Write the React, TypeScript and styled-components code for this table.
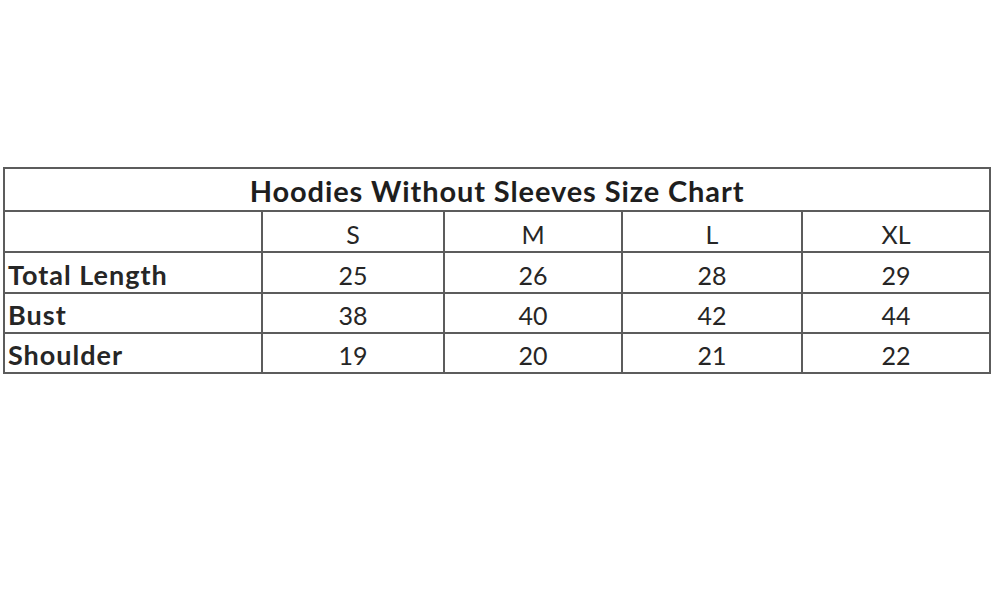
import React from 'react';
import styled, { createGlobalStyle } from 'styled-components';

const GlobalStyle = createGlobalStyle`
  html, body {
    margin: 0;
    padding: 0;
    background: #ffffff;
  }
  body {
    font-family: Lato, "Open Sans", sans-serif;
    color: #222;
  }
`;

const Page = styled.div`
  width: 994px;
  height: 590px;
  padding: 167px 0 0 3px;
  box-sizing: border-box;
`;

const Grid = styled.div`
  display: grid;
  grid-template-columns: 256px 180px 176px 178px 186px;
  grid-template-rows: 41px 39px 39px 38px 38px;
  gap: 2px;
  padding: 2px;
  width: 988px;
  box-sizing: border-box;
  background: #5c5c5c;
`;

const TitleCell = styled.div`
  grid-column: 1 / -1;
  background: #fff;
  display: flex;
  align-items: flex-end;
  justify-content: center;
  padding-bottom: 5px;
  font-size: 29px;
  letter-spacing: 0.9px;
  font-weight: 700;
  color: #1e1e1e;
  line-height: 1;
`;

const Cell = styled.div<{ $label?: boolean }>`
  background: #fff;
  display: flex;
  align-items: flex-end;
  justify-content: ${p => (p.$label ? 'flex-start' : 'center')};
  padding: 0 0 4px ${p => (p.$label ? '3px' : '0')};
  font-size: ${p => (p.$label ? '27px' : '25px')};
  letter-spacing: ${p => (p.$label ? '1px' : '0')};
  font-weight: ${p => (p.$label ? 700 : 400)};
  color: #262626;
  line-height: 1;
`;

const sizes = ['S', 'M', 'L', 'XL'];

const rows: { label: string; values: number[] }[] = [
  { label: 'Total Length', values: [25, 26, 28, 29] },
  { label: 'Bust', values: [38, 40, 42, 44] },
  { label: 'Shoulder', values: [19, 20, 21, 22] },
];

export default function App() {
  return (
    <>
      <GlobalStyle />
      <Page>
        <Grid>
          <TitleCell>Hoodies Without Sleeves Size Chart</TitleCell>
          <Cell $label />
          {sizes.map(s => (
            <Cell key={s}>{s}</Cell>
          ))}
          {rows.map(r => (
            <React.Fragment key={r.label}>
              <Cell $label>{r.label}</Cell>
              {r.values.map((v, i) => (
                <Cell key={i}>{v}</Cell>
              ))}
            </React.Fragment>
          ))}
        </Grid>
      </Page>
    </>
  );
}
